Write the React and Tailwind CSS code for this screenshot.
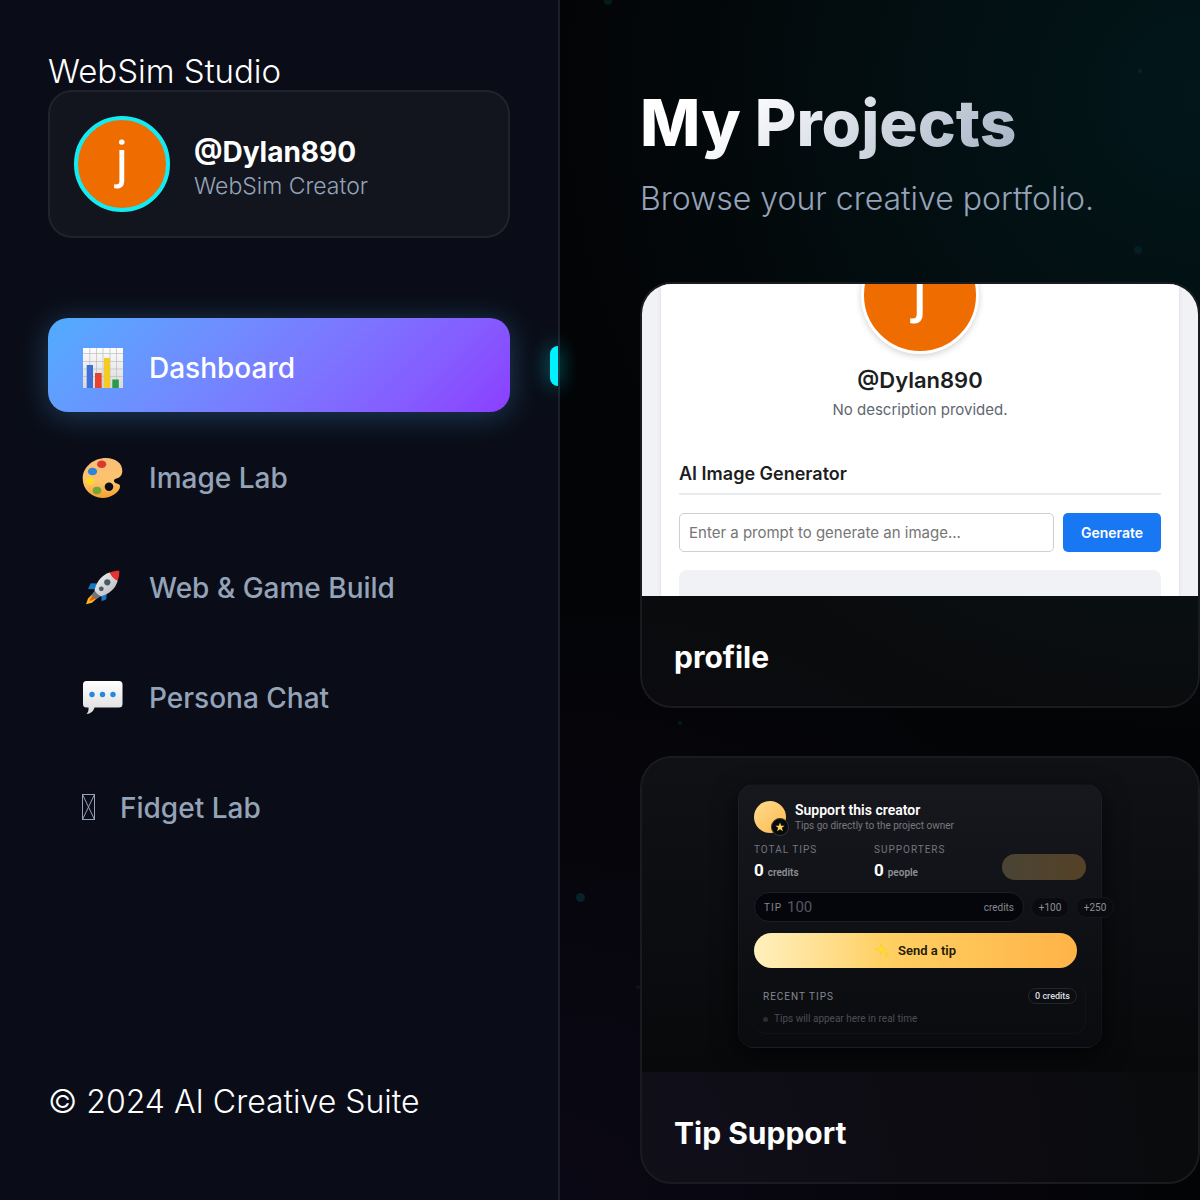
import React from 'react';

function ChartIcon() {
  return (
    <svg width="45" height="48" viewBox="0 0 45 48" aria-hidden="true">
      <defs>
        <linearGradient id="sheet" x1="0" y1="0" x2="0" y2="1">
          <stop offset="0" stopColor="#fdfdfd" />
          <stop offset="1" stopColor="#d9d9d9" />
        </linearGradient>
      </defs>
      <rect x="3" y="7" width="40" height="40" fill="url(#sheet)" />
      <path d="M3 12.500h40M3 20.500h40M3 28h40M3 35.500h40M9.800 7v40M16.500 7v40M23 7v40M30 7v40M36.500 7v40" stroke="#bdbdbd" strokeWidth=".7" />
      <rect x="6.700" y="24" width="6.300" height="23" fill="#3f6fd8" />
      <rect x="15" y="32" width="6.700" height="15" fill="#e8432f" />
      <rect x="24" y="17" width="6" height="30" fill="#f5cb22" />
      <rect x="32.300" y="38.500" width="6.500" height="8.500" fill="#2b9a48" />
    </svg>
  );
}

function PaletteIcon() {
  return (
    <svg width="45" height="48" viewBox="0 0 45 48" aria-hidden="true">
      <defs>
        <linearGradient id="wood" x1="0" y1="0" x2="0" y2="1">
          <stop offset="0" stopColor="#f9bf78" />
          <stop offset=".6" stopColor="#fcc36c" />
          <stop offset="1" stopColor="#f5a02c" />
        </linearGradient>
      </defs>
      <path
        d="M26 7C35 7 42.500 12 42.300 20c-.1 4.500-2.500 6.500-5.300 7.300-3.200.9-4 2.700-1.800 4.500 2 1.600 4.800.7 4.800 3.700C40 41 31 47 22.500 46.900 11.500 46.600 2.700 38.500 2.700 27.500 2.700 16 13.500 7 26 7zM29 31.500a4.300 4.200 0 1 0 0 8.400 4.300 4.200 0 0 0 0-8.400z"
        fill="url(#wood)"
        fillRule="evenodd"
      />
      <ellipse cx="21.700" cy="13.300" rx="4.600" ry="3.800" fill="#d93a30" />
      <ellipse cx="12.500" cy="20.500" rx="4.600" ry="3.800" fill="#2f86d6" />
      <ellipse cx="10" cy="30" rx="4" ry="3.500" fill="#fdd91f" />
      <ellipse cx="17" cy="39.500" rx="4.300" ry="3.700" fill="#6fa838" />
    </svg>
  );
}

function RocketIcon() {
  return (
    <svg width="45" height="48" viewBox="0 0 45 48" aria-hidden="true">
      <defs>
        <linearGradient id="hull" x1="0" y1="0" x2="1" y2="1">
          <stop offset="0" stopColor="#f5f5f5" />
          <stop offset="1" stopColor="#b4b4b8" />
        </linearGradient>
      </defs>
      <path d="M19 22.500 10.800 22.200 8 28l7.500.3zM27 30l-.8 8.300-4.500 2-.7-7z" fill="#1479c4" />
      <path d="M12 33.500 8 37.500 6 43.200l6-1.500 4.200-3.600z" fill="#fbb81c" />
      <path d="M12.500 34.500 9.500 39l1 1 5-2.300z" fill="#ea5a1c" />
      <path d="M14.800 29.500 11.500 34l4.500 4.500 4.800-3.200z" fill="#6d767b" />
      <path d="M29.700 11.500C22 14 17 19.500 14.500 29.200c1.500 2.500 3.500 4.500 6.300 6.100C29.500 33 35.500 27.500 37.700 19.700z" fill="url(#hull)" />
      <path d="M29.700 11.500c3-1.200 6.300-1.800 9.600-1.800.1 3.500-.4 6.800-1.600 10-3.600-1.400-6.500-4.200-8-8.200z" fill="#e53430" />
      <circle cx="27.300" cy="21.300" r="3.100" fill="#455a64" />
      <circle cx="21.300" cy="27.800" r="2.400" fill="#455a64" />
    </svg>
  );
}

function ChatIcon() {
  return (
    <svg width="45" height="48" viewBox="0 0 45 48" aria-hidden="true">
      <defs>
        <linearGradient id="bubble" x1="0" y1="0" x2="0" y2="1">
          <stop offset="0" stopColor="#ffffff" />
          <stop offset="1" stopColor="#dcdcde" />
        </linearGradient>
      </defs>
      <path
        d="M6.500 10h32.500a3.500 3.500 0 0 1 3.500 3.500v19.500a3.500 3.500 0 0 1-3.500 3.500H14.500c-1 3.800-3.800 6.300-8 6.400 1.800-1.900 2.300-3.900 2-6.400h-2A3.500 3.500 0 0 1 3 33V13.500A3.500 3.500 0 0 1 6.500 10z"
        fill="url(#bubble)"
      />
      <g fill="#2588dc">
        <circle cx="12" cy="23.500" r="2.700" />
        <circle cx="22.500" cy="23.500" r="2.700" />
        <circle cx="33" cy="23.500" r="2.700" />
      </g>
    </svg>
  );
}

function MissingGlyphIcon() {
  return (
    <svg width="16" height="32" viewBox="0 0 16 32" fill="none" stroke="currentColor" strokeWidth="1" aria-hidden="true">
      <rect x="2.500" y="5.500" width="12" height="25" />
      <path d="M2.500 5.500l12 25M14.500 5.500l-12 25" />
    </svg>
  );
}

const NAV = [
  { label: 'Dashboard', Icon: ChartIcon, active: true },
  { label: 'Image Lab', Icon: PaletteIcon },
  { label: 'Web & Game Build', Icon: RocketIcon },
  { label: 'Persona Chat', Icon: ChatIcon },
  { label: 'Fidget Lab', Icon: MissingGlyphIcon },
];

function NavItem({ item }) {
  const { Icon, label, active } = item;
  return (
    <li className="relative">
      <button
        type="button"
        className={
          active
            ? 'flex h-[94px] w-full items-center gap-6 rounded-[20px] bg-linear-135 from-[#4facfe] to-[#8b3dff] px-8 text-white shadow-[0_4px_30px_rgba(79,172,254,0.3)]'
            : 'flex h-[94px] w-full items-center gap-6 rounded-[20px] px-8 text-[#94a3b8]'
        }
      >
        <Icon />
        <span className="mt-[6px] text-[28px] leading-9 font-medium">{label}</span>
      </button>
      {active && (
        <span className="absolute top-7 -right-12 h-10 w-2 rounded-l-lg bg-[#00f2fe] shadow-[0_0_20px_rgba(0,242,254,0.6)]" />
      )}
    </li>
  );
}

function Sidebar() {
  return (
    <aside className="flex w-[560px] shrink-0 flex-col border-r-2 border-[#1c1f27] bg-[#0a0d17] p-12">
      <p className="pt-1 text-[33px] leading-[38px] font-light text-white">WebSim Studio</p>
      <div className="flex items-center gap-6 rounded-3xl border-2 border-[#20232b] bg-[#12151d] p-6">
        <div className="flex size-24 items-center justify-center rounded-full border-4 border-[#14eaf2] bg-[#ef6c00] pb-2 font-['Roboto',sans-serif] text-[52px] leading-none text-white">
          j
        </div>
        <div className="pt-2">
          <p className="text-[28px] leading-9 font-bold text-white">@Dylan890</p>
          <p className="text-[23px] leading-8 font-light text-[#94a3b8]">WebSim Creator</p>
        </div>
      </div>
      <nav className="mt-20" aria-label="Studio">
        <ul className="flex flex-col gap-4">
          {NAV.map((item) => (
            <NavItem key={item.label} item={item} />
          ))}
        </ul>
      </nav>
      <p className="mt-auto mb-[30px] text-[32px] leading-10 font-light text-white">© 2024 AI Creative Suite</p>
    </aside>
  );
}

function ProfilePreview() {
  return (
    <div className="h-[312px] overflow-hidden bg-[#f0f2f5] px-[19px] font-['Inter',sans-serif]">
      <div className="flex h-full flex-col bg-white px-[18px] shadow-[0_0_4px_rgba(0,0,0,0.1)]">
        <div className="-mt-12 flex size-[118px] shrink-0 items-center justify-center self-center rounded-full border-3 border-white bg-[#ef6c00] pb-3 font-['Roboto',sans-serif] text-[64px] leading-none text-white shadow-[0_2px_6px_rgba(0,0,0,0.18)]">
          j
        </div>
        <p className="mt-3 text-center text-[22px] leading-7 font-semibold text-[#1c1e21]">@Dylan890</p>
        <p className="mt-1 text-center text-[15px] leading-6 text-[#606770]">No description provided.</p>
        <h3 className="mt-10 border-b-2 border-[#e9ebee] pb-[7px] text-[18px] leading-6 font-semibold text-[#1c1e21]">AI Image Generator</h3>
        <div className="mt-[18px] flex gap-[9px]">
          <input
            aria-label="Image prompt"
            placeholder="Enter a prompt to generate an image..."
            className="h-[39px] min-w-0 flex-1 rounded-[5px] border border-[#ccd0d5] px-[9px] text-[15px] placeholder:text-[#757575]"
          />
          <button type="button" className="h-[39px] w-[98px] rounded-[5px] bg-[#1877f2] text-[14px] font-semibold text-white">
            Generate
          </button>
        </div>
        <div className="mt-[18px] h-10 shrink-0 rounded-t-lg bg-[#f0f2f5]" />
      </div>
    </div>
  );
}

function Stat({ label, value, unit }) {
  return (
    <div className="w-[120px]">
      <p className="text-[10px] leading-4 tracking-widest text-[#73757b]">{label}</p>
      <p className="leading-6 text-[#8d8f95]">
        <b className="text-[17px] text-white">{value}</b> <span className="text-[10px] font-semibold">{unit}</span>
      </p>
    </div>
  );
}

function TipPreview() {
  return (
    <div className="flex h-[314px] items-center justify-center overflow-hidden bg-linear-to-b from-[#101115] to-[#08090b] font-['Roboto',sans-serif]">
      <div className="mt-[2px] flex h-[264px] w-[364px] flex-col rounded-2xl border border-white/3 bg-linear-to-b from-[#17181d] to-[#0a0b0f] px-[15px] pt-4 shadow-[0_8px_24px_rgba(0,0,0,0.7)]">
        <div className="flex gap-[9px]">
          <div className="relative size-8 rounded-full bg-linear-135 from-[#ffdc8c] to-[#ffb84a]">
            <span className="absolute -right-[3px] -bottom-[3px] flex size-[18px] items-center justify-center rounded-full border border-[#34353a] bg-[#08090b]">
              <svg width="10" height="10" viewBox="0 0 24 24" fill="#ffcf5c" aria-hidden="true">
                <path d="M12 1l2.900 8h8.300l-6.700 5 2.500 8.300-7-5-7 5L7.500 14 .8 9h8.300z" />
              </svg>
            </span>
          </div>
          <div>
            <p className="text-[14px] leading-[18px] font-semibold text-white">Support this creator</p>
            <p className="text-[10px] leading-[14px] text-[#76787e]">Tips go directly to the project owner</p>
          </div>
        </div>
        <div className="mt-[9px] flex">
          <Stat label="TOTAL TIPS" value="0" unit="credits" />
          <Stat label="SUPPORTERS" value="0" unit="people" />
          <span className="mt-3 ml-2 h-[26px] w-[84px] rounded-full bg-linear-to-r from-[#494434] to-[#554126]" />
        </div>
        <div className="mt-[7px] flex items-center gap-[7px]">
          <label className="flex h-[30px] w-[270px] shrink-0 items-center gap-[5px] rounded-full border border-[#1d1f25] bg-[#05060b] px-[9px] text-[10px] text-[#85878d]">
            <span className="tracking-widest">TIP</span>
            <input placeholder="100" className="w-0 min-w-0 flex-1 text-[15px] placeholder:text-[#55575f]" />
            <span>credits</span>
          </label>
          <button type="button" className="h-[21px] w-[38px] shrink-0 rounded-full border border-[#15171d] bg-[#0a0b10] text-[10px] text-[#8d8f95]">+100</button>
          <button type="button" className="h-[21px] w-[38px] shrink-0 rounded-full border border-[#15171d] bg-[#0a0b10] text-[10px] text-[#8d8f95]">+250</button>
        </div>
        <button
          type="button"
          className="mt-[11px] mr-[9px] flex h-[35px] shrink-0 items-center justify-center gap-2 rounded-full bg-linear-to-r from-[#fff0bd] via-[#ffd062] via-40% to-[#ffb347] text-[13px] font-semibold text-[#241a08]"
        >
          <svg width="15" height="15" viewBox="0 0 15 15" fill="#fde01f" stroke="#f0c020" strokeWidth=".3" aria-hidden="true">
            <path d="M6 1l1.300 4.200L12 6.500 7.300 7.800 6 12 4.700 7.800 0 6.500l4.700-1.300z" />
            <path d="M11.500 9l.6 2 1.900.7-1.900.6-.6 2-.6-2-1.900-.6 1.900-.7z" />
          </svg>
          Send a tip
        </button>
        <div className="mt-3 h-[54px] rounded-xl border border-t-transparent border-l-transparent border-[#121319] px-2">
          <div className="flex h-[30px] items-center justify-between text-[10px] text-[#85878d]">
            <span className="tracking-widest">RECENT TIPS</span>
            <span className="rounded-full border border-[#24262c] px-[6px] text-[9px] leading-[14px] font-medium text-[#dcdde0]">0 credits</span>
          </div>
          <p className="flex items-center gap-[6px] text-[10px] leading-4 text-[#4c4e55]">
            <span className="size-[5px] rounded-full bg-[#2b2d33]" />
            Tips will appear here in real time
          </p>
        </div>
      </div>
    </div>
  );
}

function ProjectCard({ title, children }) {
  return (
    <article className="overflow-hidden rounded-[32px] border-2 border-[#191b20] bg-white/3">
      {children}
      <h2 className="px-8 pt-[43px] pb-[31px] text-[30px] leading-9 font-bold text-white">{title}</h2>
    </article>
  );
}

function Particles() {
  return (
    <div className="pointer-events-none absolute inset-0 overflow-hidden" aria-hidden="true">
      <span className="absolute top-[-3px] left-[44px] size-2 rounded-full bg-[#041a1c]" />
      <span className="absolute top-[69px] left-[578px] size-1 rounded-full bg-[#04272b]" />
      <span className="absolute top-[246px] left-[574px] size-2 rounded-full bg-[#041f24]" />
      <span className="absolute top-[721px] left-[118px] size-1 rounded-full bg-[#071a1d]" />
      <span className="absolute top-[893px] left-[16px] size-[9px] rounded-full bg-[#06222a]" />
      <span className="absolute top-[985px] left-[76px] size-1 rounded-full bg-[#08171c]" />
    </div>
  );
}

export default function App() {
  return (
    <div className="flex h-screen overflow-hidden bg-[#030406] font-['Inter',sans-serif]">
      <Sidebar />
      <main className="relative min-w-0 flex-1 bg-[radial-gradient(circle_at_100%_8%,#02171a_0%,transparent_50%),radial-gradient(circle_at_0%_100%,#0b0815_0%,transparent_45%)] pt-20 pl-20">
        <Particles />
        <div className="relative">
          <h1 className="w-fit bg-linear-135 from-white from-25% to-[#a3b0c2] bg-clip-text text-[64px] leading-[86px] font-extrabold text-transparent">My Projects</h1>
          <p className="mt-[9px] text-[32px] leading-12 font-light text-[#94a3b8]">Browse your creative portfolio.</p>
          <div className="mt-[59px] flex flex-col gap-12">
            <ProjectCard title="profile">
              <ProfilePreview />
            </ProjectCard>
            <ProjectCard title="Tip Support">
              <TipPreview />
            </ProjectCard>
          </div>
        </div>
      </main>
    </div>
  );
}
